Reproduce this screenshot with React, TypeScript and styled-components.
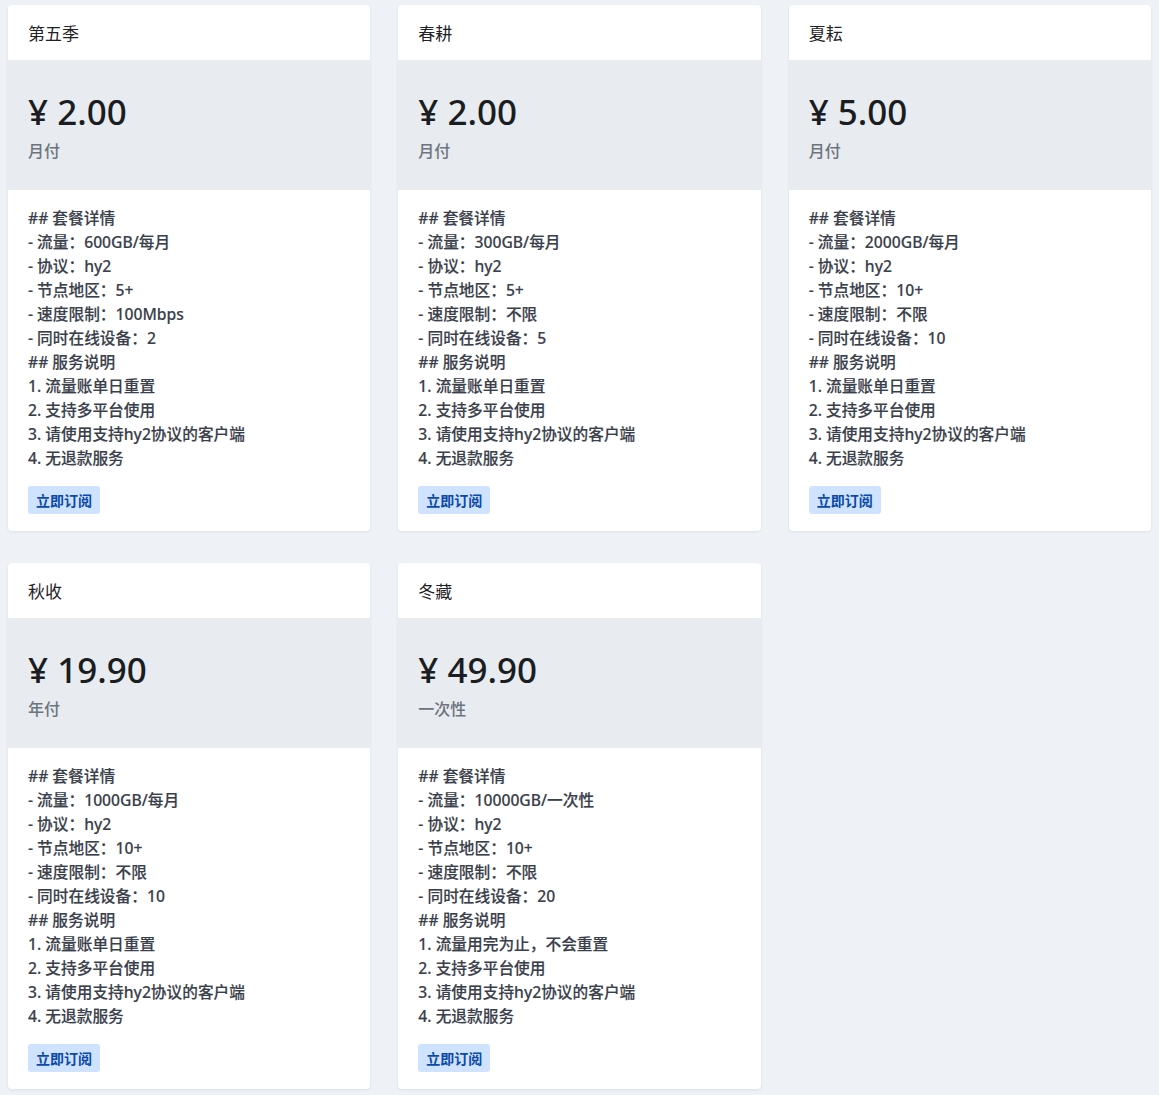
import React from 'react';
import styled, { createGlobalStyle } from 'styled-components';

const GlobalStyle = createGlobalStyle`
  html, body {
    margin: 0;
    padding: 0;
    background: #eef1f6;
  }
  body {
    font-family: "Noto Sans", "Noto Sans CJK SC", sans-serif;
    color: #212529;
  }
`;

// Page grid
const Page = styled.main`
  display: grid;
  grid-template-columns: repeat(3, 1fr);
  column-gap: 28px;
  row-gap: 32px;
  padding: 5px 8px 8px;
`;

const Card = styled.section`
  display: flex;
  flex-direction: column;
  background: #ffffff;
  border-radius: 4px;
  box-shadow: 0 1px 3px rgba(30, 45, 80, 0.08);
  overflow: hidden;
`;

const CardHeader = styled.header`
  display: flex;
  align-items: center;
  height: 55px;
  padding: 0 20px 1px;
  box-sizing: border-box;
  font-size: 17px;
  font-weight: 400;
  color: #1f2328;
`;

const PriceBlock = styled.div`
  display: flex;
  flex-direction: column;
  height: 130px;
  box-sizing: border-box;
  padding: 31px 20px 0;
  background: #e8ebef;
`;

const Price = styled.div`
  font-size: 35px;
  line-height: 42px;
  font-weight: 500;
  color: #1a1d21;
`;

const Period = styled.div`
  margin-top: 6px;
  font-size: 16px;
  line-height: 24px;
  font-weight: 500;
  color: #6c757d;
`;

const CardBody = styled.div`
  display: flex;
  flex-direction: column;
  align-items: flex-start;
  padding: 16px 20px 17px;
`;

const Lines = styled.div`
  font-size: 15.7px;
  line-height: 24px;
  font-weight: 500;
  color: #3a404b;
  -webkit-text-stroke: 0.15px #3a404b;
`;

const Line = styled.div`
  white-space: nowrap;
`;

const SubscribeButton = styled.button`
  margin-top: 16px;
  height: 28px;
  padding: 0 8px;
  border: none;
  border-radius: 3px;
  background: #cfe2ff;
  color: #0a4aa8;
  font-family: "Noto Sans", "Noto Sans CJK SC", sans-serif;
  font-size: 14px;
  font-weight: 700;
  cursor: pointer;
`;

type Plan = {
  name: string;
  price: string;
  period: string;
  traffic: string;
  regions: string;
  speed: string;
  devices: string;
  first: string;
};

const plans: Plan[] = [
  { name: '第五季', price: '2.00', period: '月付', traffic: '600GB/每月', regions: '5+', speed: '100Mbps', devices: '2', first: '流量账单日重置' },
  { name: '春耕', price: '2.00', period: '月付', traffic: '300GB/每月', regions: '5+', speed: '不限', devices: '5', first: '流量账单日重置' },
  { name: '夏耘', price: '5.00', period: '月付', traffic: '2000GB/每月', regions: '10+', speed: '不限', devices: '10', first: '流量账单日重置' },
  { name: '秋收', price: '19.90', period: '年付', traffic: '1000GB/每月', regions: '10+', speed: '不限', devices: '10', first: '流量账单日重置' },
  { name: '冬藏', price: '49.90', period: '一次性', traffic: '10000GB/一次性', regions: '10+', speed: '不限', devices: '20', first: '流量用完为止，不会重置' },
];

const PlanCard: React.FC<{ plan: Plan }> = ({ plan }) => {
  const lines = [
    '## 套餐详情',
    `- 流量：${plan.traffic}`,
    '- 协议：hy2',
    `- 节点地区：${plan.regions}`,
    `- 速度限制：${plan.speed}`,
    `- 同时在线设备：${plan.devices}`,
    '## 服务说明',
    `1. ${plan.first}`,
    '2. 支持多平台使用',
    '3. 请使用支持hy2协议的客户端',
    '4. 无退款服务',
  ];
  return (
    <Card>
      <CardHeader>{plan.name}</CardHeader>
      <PriceBlock>
        <Price>¥ {plan.price}</Price>
        <Period>{plan.period}</Period>
      </PriceBlock>
      <CardBody>
        <Lines>
          {lines.map((l, i) => (
            <Line key={i}>{l}</Line>
          ))}
        </Lines>
        <SubscribeButton>立即订阅</SubscribeButton>
      </CardBody>
    </Card>
  );
};

const App: React.FC = () => (
  <>
    <GlobalStyle />
    <Page>
      {plans.map((p) => (
        <PlanCard key={p.name} plan={p} />
      ))}
    </Page>
  </>
);

export default App;
